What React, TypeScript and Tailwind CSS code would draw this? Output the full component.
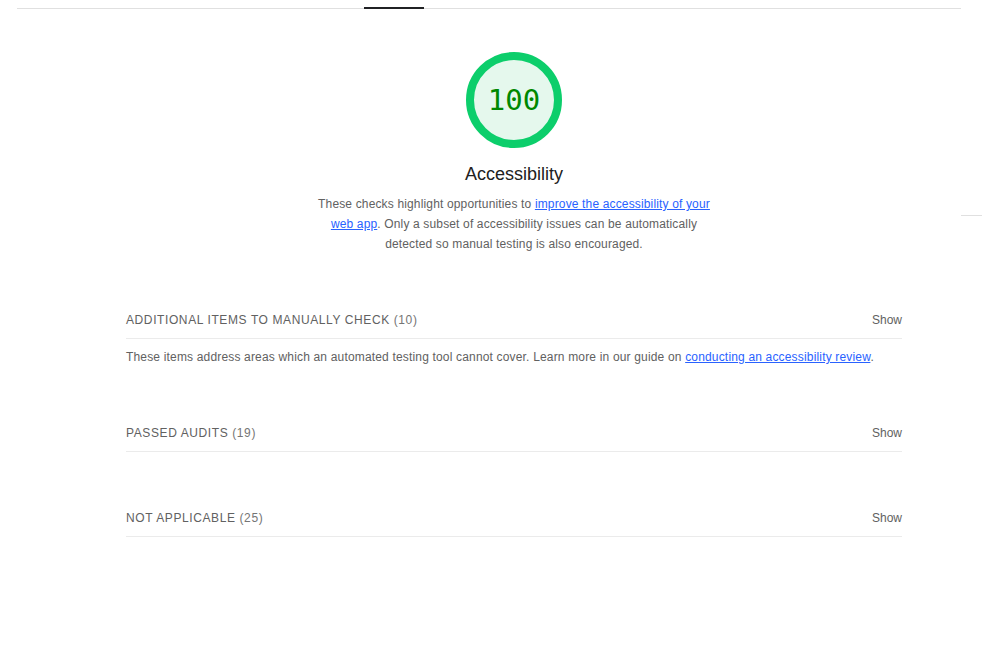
const groups = [
  {
    title: "Additional items to manually check",
    count: 10,
    description: true,
  },
  { title: "Passed audits", count: 19, description: false },
  { title: "Not applicable", count: 25, description: false },
];

function Gauge({ score }: { score: number }) {
  return (
    <div className="relative h-[96px] w-[96px]">
      <svg width="96" height="96" viewBox="0 0 96 96">
        <circle cx="48" cy="48" r="44" fill="#e5f8ed" stroke="#0cce6b" strokeWidth="8" />
      </svg>
      <div className="absolute inset-0 flex items-center justify-center font-['DejaVu_Sans_Mono',monospace] text-[29px] leading-none text-[#008800]">
        {score}
      </div>
    </div>
  );
}

export default function App() {
  return (
    <div className="flex h-[662px] w-full bg-white font-['Liberation_Sans',Arial,sans-serif]">
      <div className="w-[961px] shrink-0">
        <div className="ml-[17px] mt-[7px] flex h-[2px] w-[944px] items-end">
          <div className="h-px w-[347px] bg-[#e0e0e0]" />
          <div className="h-[2px] w-[60px] bg-[#202124]" />
          <div className="h-px flex-1 bg-[#e0e0e0]" />
        </div>

        <div className="ml-[126px] w-[776px]">
          <div className="mt-[43px] flex flex-col items-center">
            <Gauge score={100} />
            <h1 className="mt-[14px] text-[18px] leading-6 text-[#212121]">Accessibility</h1>
            <p className="mt-[8px] w-[404px] text-center text-[12px] leading-5 tracking-[0.15px] text-[#616161]">
              These checks highlight opportunities to{" "}
              <a href="#" className="text-[#2962ff] underline">
                improve the accessibility of your web app
              </a>
              . Only a subset of accessibility issues can be automatically detected so manual
              testing is also encouraged.
            </p>
          </div>

          {groups.map((group) => (
            <section key={group.title} className="mt-[48px]">
              <div className="flex h-[37px] items-center justify-between border-b border-[#ebebeb] text-[12px] text-[#616161]">
                <h2 className="uppercase tracking-[0.6px]">
                  {group.title} <span className="text-[#757575]">({group.count})</span>
                </h2>
                <button className="text-[12px] text-[#616161]">Show</button>
              </div>
              {group.description && (
                <p className="mt-[8px] text-[12px] leading-5 tracking-[0.17px] text-[#616161]">
                  These items address areas which an automated testing tool cannot cover. Learn
                  more in our guide on{" "}
                  <a href="#" className="text-[#2962ff] underline">
                    conducting an accessibility review
                  </a>
                  .
                </p>
              )}
            </section>
          ))}
        </div>
      </div>

      <div className="w-[21px] pt-[215px]">
        <div className="h-px w-full bg-[#e0e0e0]" />
      </div>
    </div>
  );
}
